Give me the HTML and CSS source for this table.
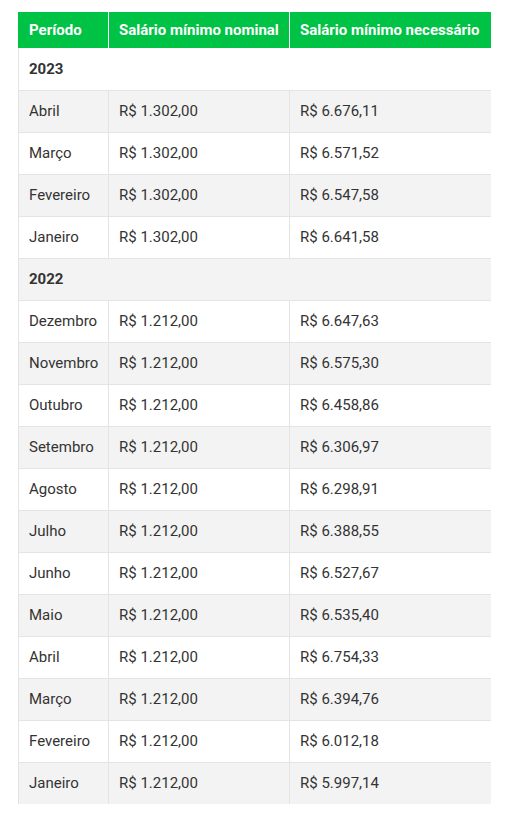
FILE: index.html
```html
<!DOCTYPE html>
<html lang="pt">
<head>
<meta charset="utf-8">
<link rel="stylesheet" href="styles.css">
</head>
<body>
<table class="tbl">
  <colgroup><col class="c1"><col class="c2"><col class="c3"></colgroup>
  <thead>
    <tr><th>Período</th><th>Salário mínimo nominal</th><th>Salário mínimo necessário</th></tr>
  </thead>
  <tbody>
    <tr class="year"><td colspan="3">2023</td></tr>
    <tr><td>Abril</td><td>R$ 1.302,00</td><td>R$ 6.676,11</td></tr>
    <tr><td>Março</td><td>R$ 1.302,00</td><td>R$ 6.571,52</td></tr>
    <tr><td>Fevereiro</td><td>R$ 1.302,00</td><td>R$ 6.547,58</td></tr>
    <tr><td>Janeiro</td><td>R$ 1.302,00</td><td>R$ 6.641,58</td></tr>
    <tr class="year"><td colspan="3">2022</td></tr>
    <tr><td>Dezembro</td><td>R$ 1.212,00</td><td>R$ 6.647,63</td></tr>
    <tr><td>Novembro</td><td>R$ 1.212,00</td><td>R$ 6.575,30</td></tr>
    <tr><td>Outubro</td><td>R$ 1.212,00</td><td>R$ 6.458,86</td></tr>
    <tr><td>Setembro</td><td>R$ 1.212,00</td><td>R$ 6.306,97</td></tr>
    <tr><td>Agosto</td><td>R$ 1.212,00</td><td>R$ 6.298,91</td></tr>
    <tr><td>Julho</td><td>R$ 1.212,00</td><td>R$ 6.388,55</td></tr>
    <tr><td>Junho</td><td>R$ 1.212,00</td><td>R$ 6.527,67</td></tr>
    <tr><td>Maio</td><td>R$ 1.212,00</td><td>R$ 6.535,40</td></tr>
    <tr><td>Abril</td><td>R$ 1.212,00</td><td>R$ 6.754,33</td></tr>
    <tr><td>Março</td><td>R$ 1.212,00</td><td>R$ 6.394,76</td></tr>
    <tr><td>Fevereiro</td><td>R$ 1.212,00</td><td>R$ 6.012,18</td></tr>
    <tr><td>Janeiro</td><td>R$ 1.212,00</td><td>R$ 5.997,14</td></tr>
  </tbody>
</table>
</body>
</html>
```
FILE: styles.css
```css
html, body {
  margin: 0;
  padding: 0;
  background: #ffffff;
}
body {
  padding: 12px 20px 0 18px;
  font-family: Roboto, "Liberation Sans", sans-serif;
  font-size: 15px;
  color: #333333;
}
.tbl {
  border-collapse: collapse;
  table-layout: fixed;
  width: 472px;
}
.c1 { width: 90px; }
.c2 { width: 181px; }
.c3 { width: 201px; }
.tbl th {
  background: #00c244;
  color: #ffffff;
  font-weight: 700;
  text-align: left;
  height: 36px;
  padding: 0 0 0 10px;
  box-sizing: border-box;
  border-left: 1px solid #ffffff;
  white-space: nowrap;
}
.tbl th:first-child {
  border-left: 1px solid #00c244;
}
.tbl td {
  height: 42px;
  padding: 0 0 0 10px;
  box-sizing: border-box;
  border-top: 1px solid #e4e4e4;
  border-left: 1px solid #e4e4e4;
  white-space: nowrap;
}
.tbl tbody tr:first-child td {
  border-top: none;
}
.tbl tbody tr:nth-child(even) td {
  background: #f3f3f3;
}
.tbl tr.year td {
  font-weight: 700;
}
```
